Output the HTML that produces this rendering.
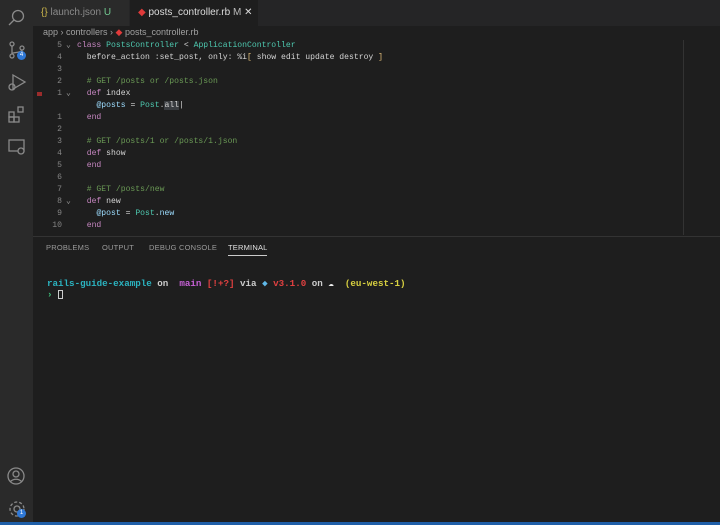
<!DOCTYPE html>
<html><head><style>
*{margin:0;padding:0;box-sizing:border-box}
body{width:720px;height:525px;background:#1e1e1e;overflow:hidden;position:relative;font-family:"Liberation Sans",sans-serif}
.act{position:absolute;left:0;top:0;width:33px;height:522px;background:#2a2a2a}
.tabs{position:absolute;left:33px;top:0;width:687px;height:26px;background:#252526}
.tab{position:absolute;top:0;height:26px;font-size:10px;line-height:26px;color:#8a8a8a;padding-left:8px}
.code{position:absolute;font-family:"Liberation Mono",monospace;font-size:8.1px;white-space:pre;color:#d4d4d4;line-height:12px}
.ln{position:absolute;left:40px;width:22px;text-align:right;font-family:"Liberation Mono",monospace;font-size:8.1px;color:#858585;line-height:12px}
.k{color:#c586c0}.c{color:#6a9955}.t{color:#4ec9b0}.v{color:#9cdcfe}
.ptab{position:absolute;top:243px;font-size:7.5px;color:#9a9a9a;letter-spacing:.2px}
.term{position:absolute;left:47px;font-family:"Liberation Mono",monospace;font-size:9.2px;white-space:pre;color:#ccc;font-weight:bold}
svg{position:absolute}
</style></head><body>
<div class="act"></div>
<svg style="left:7px;top:8px" width="20" height="20" viewBox="0 0 20 20" fill="none" stroke="#8a8a8a" stroke-width="1.3"><circle cx="11" cy="8" r="5.5"/><path d="M7 12l-5 5"/></svg>
<svg style="left:7px;top:40px" width="20" height="20" viewBox="0 0 20 20" fill="none" stroke="#8a8a8a" stroke-width="1.3"><circle cx="5" cy="4" r="2"/><circle cx="5" cy="16" r="2"/><circle cx="15" cy="8" r="2"/><path d="M5 6v8M15 10c0 3-10 2-10 4"/></svg>
<div style="position:absolute;left:17px;top:51px;width:9px;height:9px;border-radius:50%;background:#2f78d6;color:#fff;font-size:6px;text-align:center;line-height:9px">4</div>
<svg style="left:7px;top:72px" width="20" height="20" viewBox="0 0 20 20" fill="none" stroke="#8a8a8a" stroke-width="1.3"><path d="M6 3l12 7-12 7z"/><circle cx="5" cy="15" r="3"/></svg>
<svg style="left:7px;top:104px" width="20" height="20" viewBox="0 0 20 20" fill="none" stroke="#8a8a8a" stroke-width="1.3"><rect x="2" y="8" width="5" height="5"/><rect x="2" y="13" width="5" height="5"/><rect x="7" y="13" width="5" height="5"/><rect x="11" y="3" width="5" height="5"/></svg>
<svg style="left:7px;top:137px" width="20" height="20" viewBox="0 0 20 20" fill="none" stroke="#8a8a8a" stroke-width="1.3"><rect x="2" y="3" width="15" height="11"/><circle cx="14" cy="14" r="3" fill="#2a2a2a"/></svg>
<svg style="left:6px;top:466px" width="20" height="20" viewBox="0 0 20 20" fill="none" stroke="#8a8a8a" stroke-width="1.3"><circle cx="10" cy="10" r="8"/><circle cx="10" cy="8" r="3"/><path d="M4.5 15.5c3-3 8-3 11 0"/></svg>
<svg style="left:7px;top:499px" width="20" height="20" viewBox="0 0 20 20" fill="none" stroke="#8a8a8a" stroke-width="1.3"><circle cx="10" cy="10" r="3"/><circle cx="10" cy="10" r="7" stroke-dasharray="3 2"/></svg>
<div style="position:absolute;left:17px;top:509px;width:9px;height:9px;border-radius:50%;background:#2f78d6;color:#fff;font-size:6px;text-align:center;line-height:9px">1</div>
<div style="position:absolute;left:0;top:522px;width:720px;height:3px;background:#1f5fa8"></div>
<div class="tabs"></div>
<div class="tab" style="left:33px;width:96px;background:#2a2a2a"><span style="color:#c9b44a">{}</span> launch.json <span style="color:#73c991">U</span></div>
<div class="tab" style="left:130px;width:128px;background:#1e1e1e;color:#ddd"><span style="color:#e03a3a">◆</span> posts_controller.rb <span style="color:#bbb">M</span> <span style="color:#ddd">✕</span></div>
<div style="position:absolute;left:43px;top:27px;font-size:9px;color:#a0a0a0">app › controllers › <span style="color:#e03a3a">◆</span> posts_controller.rb</div>
<div class="ln" style="top:40px">5<br>4<br>3<br>2<br>1<br><br>1<br>2<br>3<br>4<br>5<br>6<br>7<br>8<br>9<br>10</div>
<div class="code" style="left:66px;top:40px;color:#999">⌄<br><br><br><br>⌄<br><br><br><br><br><br><br><br><br>⌄</div>
<div style="position:absolute;left:37px;top:92px;width:5px;height:4px;background:#9b2c2c"></div>
<div class="code" style="left:77px;top:40px"><span class="k">class</span> <span class="t">PostsController</span> &lt; <span class="t">ApplicationController</span>
  before_action :set_post, only: %i<span style="color:#e5c07b">[</span> show edit update destroy <span style="color:#e5c07b">]</span>

  <span class="c"># GET /posts or /posts.json</span>
  <span class="k">def</span> index
    <span class="v">@posts</span> = <span class="t">Post</span>.<span style="background:#3a3d41">all</span>|
  <span class="k">end</span>

  <span class="c"># GET /posts/1 or /posts/1.json</span>
  <span class="k">def</span> show
  <span class="k">end</span>

  <span class="c"># GET /posts/new</span>
  <span class="k">def</span> new
    <span class="v">@post</span> = <span class="t">Post</span>.<span class="v">new</span>
  <span class="k">end</span></div>
<div style="position:absolute;left:683px;top:40px;width:1px;height:195px;background:#333"></div>
<div style="position:absolute;left:33px;top:236px;width:687px;height:1px;background:#333"></div>
<div class="ptab" style="left:46px">PROBLEMS</div>
<div class="ptab" style="left:102px">OUTPUT</div>
<div class="ptab" style="left:149px">DEBUG CONSOLE</div>
<div class="ptab" style="left:228px;color:#e0e0e0">TERMINAL</div>
<div style="position:absolute;left:228px;top:255px;width:39px;height:1px;background:#ccc"></div>
<div class="term" style="top:278px"><span style="color:#2bb3c0">rails-guide-example</span> on  <span style="color:#c560d4">main</span> <span style="color:#e04040">[!+?]</span> via <span style="color:#5fb8e8">◆</span> <span style="color:#e04040">v3.1.0</span> on <span style="color:#eee">☁</span>  <span style="color:#d8d040">(eu-west-1)</span></div>
<div class="term" style="top:289px"><span style="color:#3ec07a">›</span> <span style="display:inline-block;width:5px;height:9px;border:1px solid #ccc;vertical-align:middle"></span></div>
</body></html>
